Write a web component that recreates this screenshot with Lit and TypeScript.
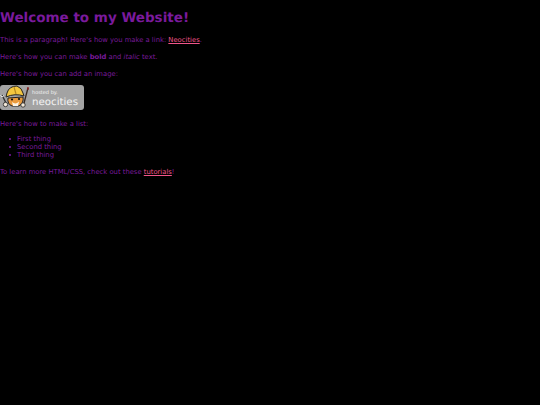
import { LitElement, html, css } from "lit";
import { customElement } from "lit/decorators.js";

@customElement("app-root")
export class AppRoot extends LitElement {
  static styles = css`
    :host {
      display: block;
      min-height: 405px;
      background: #000;
      color: #7a1a9c;
      font-family: "DejaVu Sans", Verdana, sans-serif;
      font-size: 6.8px;
      line-height: 8px;
      text-rendering: geometricPrecision;
    }
    .page { display: flow-root; }
    h1 { margin: 9px 0 8px; font-size: 13.5px; line-height: 18px; font-weight: 700; }
    p { margin: 9px 0; }
    p.intro { margin-bottom: 7px; }
    p.outro { margin-top: 9px; }
    a { color: #f0558a; text-decoration: underline; }
    ul { margin: 7px 0 9px; padding: 0 0 0 9px; list-style: none; }
    li { display: flex; align-items: center; gap: 6px; }
    li::before {
      content: "";
      width: 2px;
      height: 2px;
      border-radius: 50%;
      background: currentColor;
    }
    .badge {
      display: flex;
      width: 85px;
      height: 25px;
      margin: -2px 0 10px;
    }
    svg { display: block; }
    .badge-text { font-family: "DejaVu Sans", sans-serif; fill: #f4f4f4; }
  `;

  render() {
    return html`<div class="page">
      <h1>Welcome to my Website!</h1>
      <p>This is a paragraph! Here's how you make a link: <a href="#">Neocities</a>.</p>
      <p>Here's how you can make <strong>bold</strong> and <em>italic</em> text.</p>
      <p>Here's how you can add an image:</p>
      <div class="badge">
        <svg width="85" height="25" viewBox="0 0 85 25">
          <rect x="0" y="0" width="84" height="25" rx="3" fill="#a3a3a3" />
          <path d="M2 10 L6 18" stroke="#333" stroke-width="1.400" fill="none" />
          <path d="M0.500 10 L2 12 L4 10.500" stroke="#e8e8e8" stroke-width="1" fill="none" />
          <circle cx="5.500" cy="19.500" r="2.200" fill="#f2e8d8" stroke="#222" stroke-width="0.800" />
          <path d="M8 13 Q7 19 12 21 L19 21 Q24 18 23 12Z" fill="#ea9a3c" stroke="#222" stroke-width="1" />
          <path d="M7 8 Q9 1 17 1 Q22 3 23 8 L24 11 Q15 8 6 12Z" fill="#f4c73f" stroke="#222" stroke-width="1" />
          <path d="M14 2 L16 9" stroke="#b88a20" stroke-width="1.200" />
          <circle cx="12" cy="14.500" r="1.100" fill="#111" />
          <circle cx="19" cy="14" r="1.100" fill="#111" />
          <path d="M12 17 Q15.500 20 19 16.500 L18 21 H13Z" fill="#fbf3e4" />
          <path d="M28 3 L23.500 20" stroke="#3a2a20" stroke-width="1.300" />
          <path d="M27.300 2 L29 2.400 L28.500 5 L27 4.600Z" fill="#8c2020" />
          <circle cx="23" cy="20" r="2.200" fill="#f2e8d8" stroke="#222" stroke-width="0.800" />
          <text class="badge-text" x="32" y="9" font-size="5">hosted by.</text>
          <text class="badge-text" x="32" y="20" font-size="10" textLength="46" lengthAdjust="spacingAndGlyphs">neocities</text>
        </svg>
      </div>
      <p class="intro">Here's how to make a list:</p>
      <ul>
        <li>First thing</li>
        <li>Second thing</li>
        <li>Third thing</li>
      </ul>
      <p class="outro">To learn more HTML/CSS, check out these <a href="#">tutorials</a>!</p>
    </div>`;
  }
}
